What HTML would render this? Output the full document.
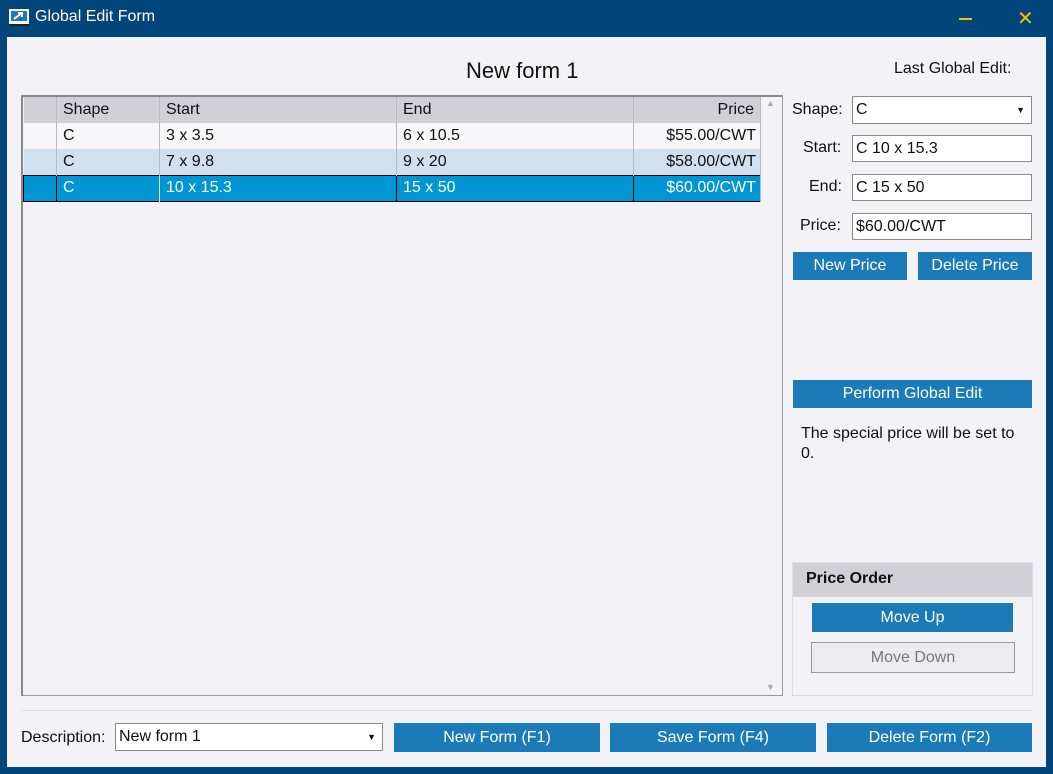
<!DOCTYPE html><html><head><style>
*{box-sizing:border-box}body{margin:0;width:1053px;height:774px;background:#02457b;font-family:"Liberation Sans",sans-serif;font-size:16px;color:#111;position:relative;overflow:hidden}
.a{position:absolute}
.btn{position:absolute;background:#1b7ab8;color:#fff;text-align:center;font-size:16px}
.inp{position:absolute;background:#fff;border:1px solid #8a8a8a;padding-left:3px;font-size:16px}
.lbl{position:absolute;font-size:16px;text-align:right}
td{padding:0 0 0 6px;height:26px;border-right:1px solid #bbb;white-space:nowrap}
</style></head><body>
<svg class="a" style="left:9px;top:9px" width="20" height="18"><rect x="0" y="0" width="20" height="15" fill="#fff"/><rect x="2" y="2" width="16" height="10" fill="#1b7ab8"/><path d="M5 10 L13 4 M9 4h4v4" stroke="#fff" stroke-width="2" fill="none"/><rect x="0" y="15" width="20" height="2" fill="#222"/></svg>
<div class="a" style="left:35px;top:8px;color:#fff;font-size:16px">Global Edit Form</div>
<div class="a" style="left:959px;top:18px;width:13px;height:2px;background:#f2c000"></div>
<div class="a" style="left:1017px;top:6px;color:#f2c000;font-size:20px">✕</div>
<div class="a" style="left:7px;top:37px;width:1039px;height:730px;background:#f2f2f7"></div>
<div class="a" style="left:466px;top:58px;font-size:22px">New form 1</div>
<div class="a" style="left:894px;top:60px;font-size:16px">Last Global Edit:</div>
<div class="a" style="left:21px;top:95px;width:762px;height:601px;border:1px solid #999;background:#f2f2f7;border-top:2px solid #888;border-left:2px solid #888"></div>
<table class="a" style="left:23px;top:97px;width:738px;border-collapse:collapse;font-size:16px">
<tr style="background:#d0d0d6;height:26px"><td style="width:33px"></td><td style="width:103px">Shape</td><td style="width:237px">Start</td><td style="width:237px">End</td><td style="text-align:right;padding-right:6px">Price</td></tr>
<tr style="background:#f7f7fa"><td></td><td>C</td><td>3 x 3.5</td><td>6 x 10.5</td><td style="text-align:right;padding-right:4px">$55.00/CWT</td></tr>
<tr style="background:#cfe0ee"><td></td><td>C</td><td>7 x 9.8</td><td>9 x 20</td><td style="text-align:right;padding-right:4px">$58.00/CWT</td></tr>
<tr style="background:#0096d6;color:#fff;border:1px solid #000"><td style="border-right:1px solid #000"></td><td style="border-right:1px solid #ddd">C</td><td style="border-right:1px solid #000">10 x 15.3</td><td style="border-right:1px solid #000">15 x 50</td><td style="text-align:right;padding-right:4px">$60.00/CWT</td></tr>
</table>
<div class="a" style="left:766px;top:98px;font-size:9px;color:#aaa">▲</div>
<div class="a" style="left:766px;top:682px;font-size:9px;color:#aaa">▼</div>
<div class="lbl" style="left:792px;top:101px">Shape:</div>
<div class="inp" style="left:852px;top:96px;width:180px;height:28px;line-height:26px">C<span style="position:absolute;right:6px;font-size:9px">▼</span></div>
<div class="lbl" style="left:803px;top:139px">Start:</div>
<div class="inp" style="left:852px;top:135px;width:180px;height:27px;line-height:25px">C 10 x 15.3</div>
<div class="lbl" style="left:809px;top:178px">End:</div>
<div class="inp" style="left:852px;top:174px;width:180px;height:27px;line-height:25px">C 15 x 50</div>
<div class="lbl" style="left:800px;top:217px">Price:</div>
<div class="inp" style="left:852px;top:213px;width:180px;height:27px;line-height:25px">$60.00/CWT</div>
<div class="btn" style="left:793px;top:252px;width:114px;height:28px;line-height:27px">New Price</div>
<div class="btn" style="left:918px;top:252px;width:114px;height:28px;line-height:27px">Delete Price</div>
<div class="btn" style="left:793px;top:380px;width:239px;height:28px;line-height:27px">Perform Global Edit</div>
<div class="a" style="left:801px;top:424px;width:225px;line-height:20px">The special price will be set to 0.</div>
<div class="a" style="left:792px;top:562px;width:241px;height:134px;border:1px solid #ddd"></div>
<div class="a" style="left:793px;top:563px;width:239px;height:34px;background:#d0d0d6;font-weight:bold;padding:7px 0 0 13px">Price Order</div>
<div class="btn" style="left:812px;top:603px;width:201px;height:29px;line-height:29px">Move Up</div>
<div class="a" style="left:811px;top:642px;width:204px;height:31px;border:1px solid #999;background:#ececef;color:#777;text-align:center;line-height:29px">Move Down</div>
<div class="a" style="left:21px;top:710px;width:1012px;border-top:1px solid #ddd"></div>
<div class="a" style="left:21px;top:729px">Description:</div>
<div class="inp" style="left:115px;top:723px;width:268px;height:28px;line-height:26px">New form 1<span style="position:absolute;right:6px;font-size:9px">▼</span></div>
<div class="btn" style="left:394px;top:723px;width:206px;height:29px;line-height:29px">New Form (F1)</div>
<div class="btn" style="left:610px;top:723px;width:206px;height:29px;line-height:29px">Save Form (F4)</div>
<div class="btn" style="left:827px;top:723px;width:205px;height:29px;line-height:29px">Delete Form (F2)</div>
</body></html>
